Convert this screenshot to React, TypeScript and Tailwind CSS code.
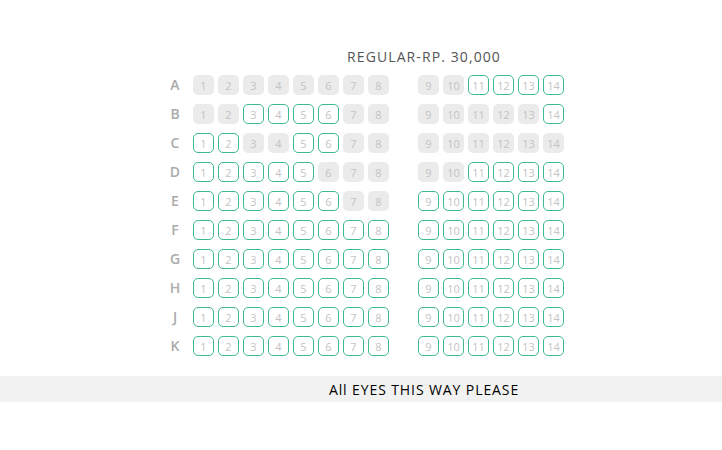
import React from 'react';

// seats that are still free, per row
const rows: { label: string; open: number[] }[] = [
  { label: 'A', open: [11, 12, 13, 14] },
  { label: 'B', open: [3, 4, 5, 6, 14] },
  { label: 'C', open: [1, 2, 5, 6] },
  { label: 'D', open: [1, 2, 3, 4, 5, 11, 12, 13, 14] },
  { label: 'E', open: [1, 2, 3, 4, 5, 6, 9, 10, 11, 12, 13, 14] },
  { label: 'F', open: [1, 2, 3, 4, 5, 6, 7, 8, 9, 10, 11, 12, 13, 14] },
  { label: 'G', open: [1, 2, 3, 4, 5, 6, 7, 8, 9, 10, 11, 12, 13, 14] },
  { label: 'H', open: [1, 2, 3, 4, 5, 6, 7, 8, 9, 10, 11, 12, 13, 14] },
  { label: 'J', open: [1, 2, 3, 4, 5, 6, 7, 8, 9, 10, 11, 12, 13, 14] },
  { label: 'K', open: [1, 2, 3, 4, 5, 6, 7, 8, 9, 10, 11, 12, 13, 14] },
];

const left = [1, 2, 3, 4, 5, 6, 7, 8];
const right = [9, 10, 11, 12, 13, 14];

function Seat({ n, open }: { n: number; open: boolean }) {
  return (
    <div
      className={`w-[21px] h-[20px] rounded-[5px] flex items-center justify-center text-[11px] leading-none font-medium text-[#c4c4c4] ${
        open ? 'border border-[#3dbb8c] bg-white' : 'bg-[#ebebeb]'
      }`}
    >
      {n}
    </div>
  );
}

export default function App() {
  return (
    <div
      className="w-full h-[450px] bg-white"
      style={{ fontFamily: '"Open Sans", "Liberation Sans", sans-serif' }}
    >
      <div className="pt-[47px] pl-[126px] text-center text-[14px] leading-[20px] font-medium text-[#555555] tracking-[1.1px]">
        REGULAR-RP. 30,000
      </div>

      <div className="mt-[8px] flex flex-col gap-[9px] pl-[165px]">
        {rows.map((row) => (
          <div key={row.label} className="flex items-center h-[20px]">
            <div className="w-[20px] text-center text-[14px] leading-[20px] font-semibold text-[#ababab]">
              {row.label}
            </div>
            <div className="ml-[8px] flex gap-[4px]">
              {left.map((n) => (
                <Seat key={n} n={n} open={row.open.includes(n)} />
              ))}
            </div>
            <div className="ml-[29px] flex gap-[4px]">
              {right.map((n) => (
                <Seat key={n} n={n} open={row.open.includes(n)} />
              ))}
            </div>
          </div>
        ))}
      </div>

      <div className="mt-[20px] h-[26px] bg-[#f2f2f2] flex items-center justify-center pl-[126px] text-[14px] font-medium text-black tracking-[0.9px]">
        All EYES THIS WAY PLEASE
      </div>
    </div>
  );
}
